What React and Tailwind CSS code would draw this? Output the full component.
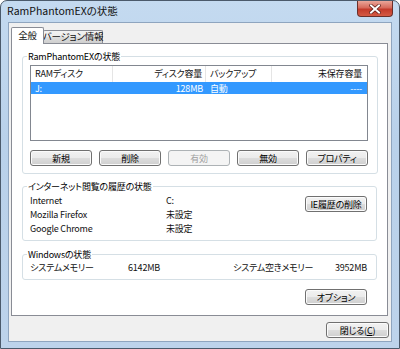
import React from 'react'

const btnFace =
  'border-[#707070] bg-[linear-gradient(#f2f2f2,#ebebeb_50%,#dddddd_50%,#cfcfcf)] shadow-[inset_0_0_0_1px_#fbfbfb] text-black'

function Boton({ children, disabled = false, className = '' }) {
  return (
    <button
      disabled={disabled}
      className={`h-[16px] rounded-[3px] border flex items-center justify-center text-[9px] leading-none whitespace-nowrap ${
        disabled ? 'border-[#adb2b5] bg-[#f4f4f4] text-[#a0a0a0]' : btnFace
      } ${className}`}
    >
      {children}
    </button>
  )
}

function Grupo({ titulo, children, className = '' }) {
  return (
    <fieldset className={`border border-[#d5dfe5] rounded-[3px] ${className}`}>
      <legend className="ml-[4px] px-[1px] text-[9px] leading-[11px] text-black whitespace-nowrap">{titulo}</legend>
      {children}
    </fieldset>
  )
}

function CerrarX() {
  return (
    <svg width="12" height="10" viewBox="0 0 12 10">
      <path d="M2 1.5 L10 8.5 M10 1.5 L2 8.5" stroke="#5a1a14" strokeWidth="3.4" strokeLinecap="square" />
      <path d="M2 1.5 L10 8.5 M10 1.5 L2 8.5" stroke="#ffffff" strokeWidth="2" strokeLinecap="square" />
    </svg>
  )
}

export default function App() {
  return (
    <div className="w-[400px] h-[349px] flex flex-col rounded-t-[7px] border border-[#4b5a6b] bg-[linear-gradient(180deg,#c4daf0,#b9d1ea_40%,#bdd3eb)] font-['Noto_Sans_CJK_JP',sans-serif] [font-feature-settings:'palt'] tracking-[-0.2px] text-[#111]">
      {/* タイトルバー */}
      <div className="h-[21px] flex items-start">
        <span className="ml-[6px] mt-[3px] text-[10.5px] leading-[13px] tracking-normal whitespace-nowrap">RamPhantomEXの状態</span>
        <div className="ml-auto mr-[6px] w-[36px] h-[16px] rounded-b-[4px] border border-t-0 border-[#6b2f2a] bg-[linear-gradient(#eaa699,#d66a5b_45%,#c33b2b_55%,#d45a44)] flex items-center justify-center">
          <CerrarX />
        </div>
      </div>

      {/* クライアント領域 */}
      <div className="mx-[7px] mb-[6px] flex-1 border border-[#8fa5bf] bg-[#f0f0f0] flex flex-col pl-[2px] pr-[2px] pt-[4px]">
        {/* タブ */}
        <div className="flex items-end h-[16px] text-[9.5px] leading-none whitespace-nowrap">
          <div className="relative z-10 -mb-px h-[17px] w-[33px] border border-b-0 border-[#898c95] bg-white rounded-t-[2px] flex items-center justify-center">
            全般
          </div>
          <div className="h-[13px] w-[60px] -ml-px border border-b-0 border-[#898c95] rounded-t-[2px] bg-[linear-gradient(#f2f2f2,#ebebeb_50%,#dddddd_50%,#cfcfcf)] flex items-center justify-center">
            バージョン情報
          </div>
        </div>

        <div className="w-[377px] h-[273px] border border-[#898c95] bg-white px-[10px] pt-[7px] flex flex-col">
          {/* RamPhantomEXの状態 */}
          <Grupo titulo="RamPhantomEXの状態">
            <div className="pl-[7px] pr-[9px] pt-[3px] pb-[7px]">
              <div className="h-[76px] border border-[#828790] bg-white text-[9px] whitespace-nowrap">
                <div className="h-[16px] flex items-center">
                  <div className="w-[82px] h-full pl-[4px] flex items-center border-r border-[#e5e5e5]">RAMディスク</div>
                  <div className="w-[93px] h-full pr-[3px] flex items-center justify-end border-r border-[#e5e5e5]">ディスク容量</div>
                  <div className="w-[66px] h-full pl-[4px] flex items-center border-r border-[#e5e5e5]">バックアップ</div>
                  <div className="flex-1 h-full pr-[5px] flex items-center justify-end">未保存容量</div>
                </div>
                <div className="h-[12px] flex items-center bg-[#3399ff] text-white leading-none">
                  <div className="w-[82px] pl-[4px]">J:</div>
                  <div className="w-[93px] pr-[3px] text-right">128MB</div>
                  <div className="w-[66px] pl-[4px]">自動</div>
                  <div className="flex-1 pr-[5px] text-right">----</div>
                </div>
              </div>
              <div className="mt-[9px] flex gap-[7px]">
                <Boton className="w-[62px]">新規</Boton>
                <Boton className="w-[62px]">削除</Boton>
                <Boton className="w-[62px]" disabled>
                  有効
                </Boton>
                <Boton className="w-[62px]">無効</Boton>
                <Boton className="w-[62px]">プロパティ</Boton>
              </div>
            </div>
          </Grupo>

          {/* インターネット閲覧の履歴の状態 */}
          <Grupo titulo="インターネット閲覧の履歴の状態" className="mt-[7px]">
            <div className="pl-[7px] pr-[9px] pt-[2px] pb-[4px] flex text-[9px] whitespace-nowrap">
              <div className="flex flex-col">
                {[
                  ['Internet', 'C:'],
                  ['Mozilla Firefox', '未設定'],
                  ['Google Chrome', '未設定'],
                ].map(([nombre, valor]) => (
                  <div key={nombre} className="h-[14px] flex items-center">
                    <span className="w-[136px]">{nombre}</span>
                    <span>{valor}</span>
                  </div>
                ))}
              </div>
              <Boton className="ml-auto mt-[2px] w-[62px]">IE履歴の削除</Boton>
            </div>
          </Grupo>

          {/* Windowsの状態 */}
          <Grupo titulo="Windowsの状態" className="mt-[8px]">
            <div className="pl-[7px] pr-[9px] pt-[2px] pb-[5px] flex items-center text-[9px] leading-[12px] whitespace-nowrap">
              <span className="w-[98px]">システムメモリー</span>
              <span className="w-[105px]">6142MB</span>
              <span>システム空きメモリー</span>
              <span className="ml-auto">3952MB</span>
            </div>
          </Grupo>

          <div className="mt-[9px] flex justify-end pr-[10px]">
            <Boton className="w-[62px]">オプション</Boton>
          </div>
        </div>

        <div className="mt-[6px] flex justify-end">
          <Boton className="w-[63px]">
            閉じる(<span className="underline">C</span>)
          </Boton>
        </div>
      </div>
    </div>
  )
}
